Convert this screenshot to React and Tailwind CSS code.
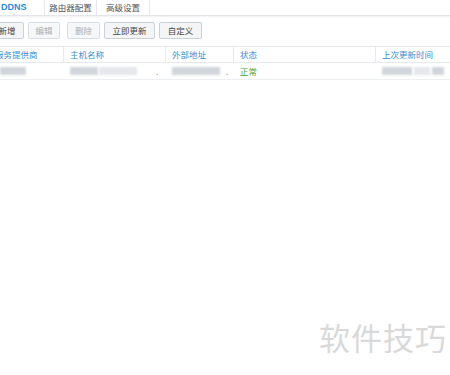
import React from 'react';

const font = { fontFamily: '"Noto Sans CJK SC", "Liberation Sans", sans-serif' };

const Blur = ({ w, tone = 'bg-gray-300' }) => (
  <span className={`inline-block h-[8px] ${tone} blur-[1px]`} style={{ width: w }} />
);

export default function App() {
  const cols = [
    { label: '服务提供商', w: 'w-[75px]' },
    { label: '主机名称', w: 'w-[102px]' },
    { label: '外部地址', w: 'w-[68px]' },
    { label: '状态', w: 'w-[142px]' },
    { label: '上次更新时间', w: 'flex-1' },
  ];

  return (
    <div className="relative w-[450px] h-[375px] overflow-hidden bg-white text-[8.5px]" style={font}>
      {/* Tabs */}
      <div className="h-[16px] flex border-b border-[#e3e6ea] shadow-[0_1px_2px_rgba(0,0,0,0.06)] -ml-[4px]">
        <div className="relative w-[49px] flex items-center pl-[5px] font-bold text-[#2f8ad6] text-[9px] border-r border-[#e6e8eb]" style={{ fontFamily: '"Liberation Sans", sans-serif' }}>
          DDNS
          <span className="absolute left-[15px] -bottom-[1px] w-0 h-0 border-l-[3px] border-r-[3px] border-b-[3px] border-l-transparent border-r-transparent border-b-[#e3e6ea]" />
        </div>
        <div className="w-[52px] flex items-center justify-center text-[#555] border-r border-[#e6e8eb]">路由器配置</div>
        <div className="w-[53px] flex items-center justify-center text-[#555] border-r border-[#e6e8eb]">高级设置</div>
      </div>

      {/* Toolbar */}
      <div className="flex items-center gap-[4px] mt-[6px] -ml-[10px] h-[17px]">
        <button className="w-[34px] h-[17px] rounded-[2px] border border-[#c9d0d8] bg-[#f3f5f7] text-[#444]">新增</button>
        <button className="w-[32px] h-[17px] rounded-[2px] border border-[#d9dee3] bg-[#f6f7f9] text-[#aab0b6]">编辑</button>
        <button className="w-[33px] h-[17px] rounded-[2px] border border-[#d9dee3] bg-[#f6f7f9] text-[#aab0b6] ml-[3px]">删除</button>
        <button className="w-[51px] h-[17px] rounded-[2px] border border-[#c9d0d8] bg-[#f3f5f7] text-[#444]">立即更新</button>
        <button className="w-[43px] h-[17px] rounded-[2px] border border-[#c9d0d8] bg-[#f3f5f7] text-[#444]">自定义</button>
      </div>

      {/* Table */}
      <div className="mt-[7px] -ml-[11px] w-[470px]">
        <div className="flex h-[17px] border-t border-b border-[#e6e9ec]">
          {cols.map((c, i) => (
            <div key={c.label} className={`${c.w} flex items-center pl-[6px] text-[#3a8ed3] ${i < 4 ? 'border-r border-[#e6e9ec]' : ''}`}>
              {c.label}
            </div>
          ))}
        </div>
        <div className="flex h-[17px] border-b border-[#eceff1] items-center">
          <div className="w-[75px] pl-[11px] flex items-center"><Blur w={26} /></div>
          <div className="w-[102px] pl-[6px] flex items-center gap-[1px]">
            <Blur w={28} />
            <Blur w={38} tone="bg-gray-200" />
            <span className="ml-[18px] text-[#999]">.</span>
          </div>
          <div className="w-[68px] pl-[6px] flex items-center">
            <Blur w={48} />
            <span className="ml-[6px] text-[#999]">.</span>
          </div>
          <div className="w-[142px] pl-[6px] text-[#4aa23a]">正常</div>
          <div className="flex-1 pl-[6px] flex items-center gap-[2px]">
            <Blur w={30} />
            <Blur w={16} tone="bg-gray-200" />
            <Blur w={12} tone="bg-gray-300" />
          </div>
        </div>
      </div>

      {/* Watermark */}
      <div className="absolute left-[319px] top-[321px] text-[31px] leading-none text-[#d9d9d9] tracking-[1px]">软件技巧</div>
    </div>
  );
}
